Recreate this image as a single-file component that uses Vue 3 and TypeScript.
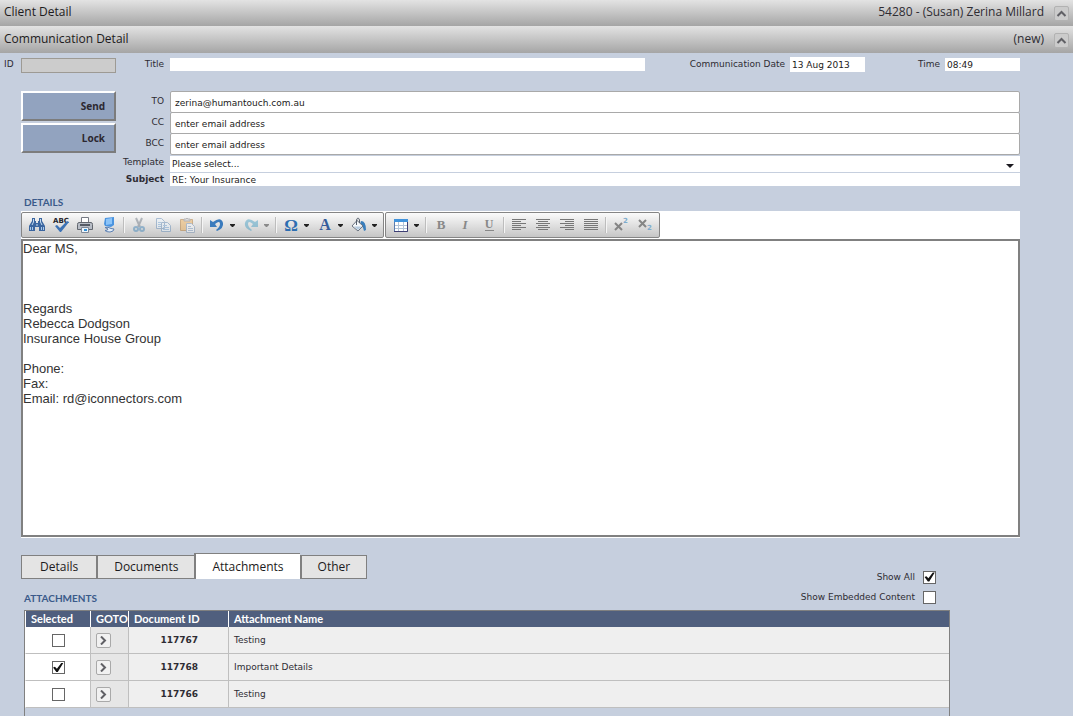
<script setup lang="ts">
import { ref } from 'vue'

interface Tool {
  icon: string
  label: string
  menu?: boolean
  disabled?: boolean
}

const title = ref('')
const recordId = ref('')
const date = ref('13 Aug 2013')
const time = ref('08:49')
const subject = ref('RE: Your Insurance')
const template = ref('')
const recipients = ref([
  { id: 'to', label: 'TO', value: 'zerina@humantouch.com.au' },
  { id: 'cc', label: 'CC', value: 'enter email address' },
  { id: 'bcc', label: 'BCC', value: 'enter email address' },
])
const body = ref(
  'Dear MS,\n\n\n\nRegards\nRebecca Dodgson\nInsurance House Group\n\nPhone:\nFax:\nEmail: rd@iconnectors.com',
)

const toolGroups: Tool[][][] = [
  [
    [
      { icon: 'find', label: 'Find' },
      { icon: 'spell', label: 'Check spelling' },
      { icon: 'print', label: 'Print' },
      { icon: 'preview', label: 'Select all' },
    ],
    [
      { icon: 'cut', label: 'Cut', disabled: true },
      { icon: 'copy', label: 'Copy', disabled: true },
      { icon: 'paste', label: 'Paste', disabled: true },
    ],
    [
      { icon: 'undo', label: 'Undo', menu: true },
      { icon: 'redo', label: 'Redo', menu: true, disabled: true },
    ],
    [
      { icon: 'omega', label: 'Insert symbol', menu: true },
      { icon: 'color', label: 'Text colour', menu: true },
      { icon: 'fill', label: 'Background colour', menu: true },
    ],
  ],
  [
    [{ icon: 'table', label: 'Insert table', menu: true }],
    [
      { icon: 'bold', label: 'Bold' },
      { icon: 'italic', label: 'Italic' },
      { icon: 'underline', label: 'Underline' },
    ],
    [
      { icon: 'left', label: 'Align left' },
      { icon: 'center', label: 'Align centre' },
      { icon: 'right', label: 'Align right' },
      { icon: 'justify', label: 'Justify' },
    ],
    [
      { icon: 'super', label: 'Superscript' },
      { icon: 'sub', label: 'Subscript' },
    ],
  ],
]

const alignPaths: Record<string, string> = {
  left: 'M1 2.5h14M1 4.5h9M1 6.5h14M1 8.5h9M1 10.5h14M1 12.5h9',
  center: 'M1 2.5h14M3 4.5h10M1 6.5h14M3 8.5h10M1 10.5h14M3 12.5h10',
  right: 'M1 2.5h14M6 4.5h9M1 6.5h14M6 8.5h9M1 10.5h14M6 12.5h9',
  justify: 'M1 2.5h14M1 4.5h14M1 6.5h14M1 8.5h14M1 10.5h14M1 12.5h14',
}

const tabs = ['Details', 'Documents', 'Attachments', 'Other']
const activeTab = ref('Attachments')
const showAll = ref(true)
const showEmbedded = ref(false)
const attachments = ref([
  { id: 117767, name: 'Testing', selected: false },
  { id: 117768, name: 'Important Details', selected: true },
  { id: 117766, name: 'Testing', selected: false },
])
</script>

<template>
  <main class="page">
    <header class="bar">
      <h1>Client Detail</h1>
      <span class="bar-info">54280 - (Susan) Zerina Millard</span>
      <button class="collapse" type="button" aria-label="Collapse client detail">
        <svg width="11" height="7" viewBox="0 0 11 7"><path d="M1.5 6 5.5 2l4 4" /></svg>
      </button>
    </header>
    <header class="bar second">
      <h1>Communication Detail</h1>
      <span class="bar-info">(new)</span>
      <button class="collapse" type="button" aria-label="Collapse communication detail">
        <svg width="11" height="7" viewBox="0 0 11 7"><path d="M1.5 6 5.5 2l4 4" /></svg>
      </button>
    </header>

    <section class="meta">
      <label class="id-label" for="rec-id">ID</label>
      <input id="rec-id" v-model="recordId" class="id-box" type="text" readonly />
      <label class="title-label" for="title">Title</label>
      <input id="title" v-model="title" class="plain title-box" type="text" />
      <label class="date-label" for="date">Communication Date</label>
      <input id="date" v-model="date" class="plain stamp date-box" type="text" />
      <label class="time-label" for="time">Time</label>
      <input id="time" v-model="time" class="plain stamp" type="text" />
    </section>

    <section class="compose">
      <div class="actions">
        <button type="button">Send</button>
        <button type="button">Lock</button>
      </div>
      <div class="fields">
        <div v-for="r in recipients" :key="r.id" class="recipient">
          <label :for="r.id">{{ r.label }}</label>
          <input :id="r.id" v-model="r.value" type="text" />
        </div>
        <div class="line template-line">
          <label for="template">Template</label>
          <div class="select-wrap">
            <select id="template" v-model="template">
              <option value="">Please select...</option>
            </select>
            <svg width="8" height="4" viewBox="0 0 8 4"><path d="M0 0h8L4 4z" /></svg>
          </div>
        </div>
        <div class="line">
          <label class="strong" for="subject">Subject</label>
          <input id="subject" v-model="subject" class="plain" type="text" />
        </div>
      </div>
    </section>

    <section class="editor">
      <h2><label for="body">DETAILS</label></h2>
      <div class="toolbars">
        <div v-for="(group, g) in toolGroups" :key="g" class="toolbar" role="toolbar">
          <div v-for="(set, s) in group" :key="s" class="set">
            <button
              v-for="tool in set"
              :key="tool.icon"
              type="button"
              class="tool"
              :class="{ menu: tool.menu, faded: tool.disabled }"
              :disabled="tool.disabled"
              :aria-label="tool.label"
            >
              <svg class="icon" width="16" height="16" viewBox="0 0 16 16">
                <g v-if="tool.icon === 'find'">
                  <path d="M3 1h3v3h1v2h2V4h1V1h3v3l3 5v5h-6v-4H6v4H0V9l3-5z" fill="#3b66a0" />
                  <path d="M4.500 2v3L3 8M11.500 2v3L13 8M7 8h2" stroke="#c5dcf2" fill="none" />
                  <path d="M1.500 10v3M3.500 10v3M12.500 10v3M14.500 10v3" stroke="#a9c8e8" fill="none" />
                </g>
                <g v-else-if="tool.icon === 'spell'">
                  <text x="0" y="6" font-size="7" font-weight="700" fill="#25252c">ABC</text>
                  <path d="m2 9 2-1 3 3 7-7 2 1-8 10H7z" fill="#3d73b5" />
                </g>
                <g v-else-if="tool.icon === 'print'">
                  <path d="M4.500 .5h7v6h-7z" fill="#fff" stroke="#767a84" />
                  <path d="M2 5.500h12q1.500 0 1.500 2v5H.5v-5q0-2 1.500-2z" fill="#b8bdc6" stroke="#62676f" />
                  <path d="M3 8h10" stroke="#555b66" stroke-width="2" />
                  <path d="M4.500 10.500h7v5h-7z" fill="#eef6fc" stroke="#7f8896" />
                  <path d="M7 13h3" stroke="#2f8fd8" stroke-width="2" />
                </g>
                <g v-else-if="tool.icon === 'preview'">
                  <path d="m4 1 9-1v8l-3 2-6-1-1-2z" fill="#4a94e0" />
                  <path d="m5 2 6-1v6l-6 1z" fill="#8cc4f8" />
                  <path d="M4 10.500q3-1 6 1l3 .5q0 2.500-4 3-4 0-5-1.500 3 0 3-1.500z" fill="#e3eefa" stroke="#5c7fb0" />
                </g>
                <g v-else-if="tool.icon === 'cut'">
                  <path d="m5 1 4 9M11 1 7 10" stroke="#66717e" stroke-width="2" fill="none" />
                  <circle cx="5" cy="12" r="2" fill="none" stroke="#367eb5" stroke-width="2" />
                  <circle cx="11" cy="12" r="2" fill="none" stroke="#367eb5" stroke-width="2" />
                </g>
                <g v-else-if="tool.icon === 'copy'">
                  <path d="M1.500 1.500h5l3 3v7h-8zM6.500 5.500h6l3 3v6h-9z" fill="#eaf4fd" stroke="#5884b3" />
                  <path d="M3 5.500h3M3 7.500h3M3 9.500h3M8 8.500h4M8 10.500h6M8 12.500h6" stroke="#6aa1d7" />
                </g>
                <g v-else-if="tool.icon === 'paste'">
                  <path d="M1.500 2.500h12v11h-12z" fill="#eda94b" stroke="#a9691a" />
                  <path d="M5 4V2h2q1-2 2 0h2v2z" fill="#c9c9cc" stroke="#74747a" />
                  <path d="M7.500 6.500h5l3 3v6h-8z" fill="#f5f8fc" stroke="#6e8bae" />
                  <path d="M9 9.500h3M9 11.500h5M9 13.500h5" stroke="#7698c1" />
                </g>
                <g v-else-if="tool.icon === 'undo' || tool.icon === 'redo'">
                  <path
                    :transform="tool.icon === 'redo' ? 'matrix(-1 0 0 1 16 0)' : undefined"
                    d="M1 3v7h7L6 7q5-4 5 0 0 3-4 6l1 1q7-3 6-8-2-7-10-1z"
                    :fill="tool.icon === 'redo' ? '#3c9ac1' : '#3a7bbd'"
                  />
                </g>
                <text v-else-if="tool.icon === 'omega'" class="glyph" x="8" y="14" font-size="17" fill="#2d6eb1">Ω</text>
                <text v-else-if="tool.icon === 'color'" class="glyph" x="8" y="13" font-size="16" fill="#355c9b">A</text>
                <g v-else-if="tool.icon === 'fill'">
                  <path d="M10 4q5 0 5 9l-2 1q-1-5-4-7z" fill="#397ebc" />
                  <path d="m6 3.500 6 5.500-5 5-6-5z" fill="#f4f7fa" stroke="#6c7480" />
                  <path d="M3 9.500h8L7 13z" fill="#b5cbe0" />
                  <path d="M5.500 8V3q1.500-4 3 0v3" fill="none" stroke="#58616e" />
                </g>
                <g v-else-if="tool.icon === 'table'">
                  <path d="M1.500 2.500h13v12h-13z" fill="#fff" stroke="#5a7cae" />
                  <path d="M1 2h14v3H1z" fill="#4193dc" />
                  <path d="M2 8.500h12M2 11.500h12M5.500 5v9M10.500 5v9" stroke="#b3c4d8" />
                  <path d="M14.500 5v9.500H1" fill="none" stroke="#3e3e73" />
                </g>
                <text v-else-if="tool.icon === 'bold'" class="glyph" x="8" y="12" font-size="13" fill="#888">B</text>
                <text v-else-if="tool.icon === 'italic'" class="glyph slant" x="8" y="12" font-size="13" fill="#888">I</text>
                <g v-else-if="tool.icon === 'underline'">
                  <text class="glyph" x="8" y="11" font-size="12" fill="#888">U</text>
                  <path d="M4 13.500h9" stroke="#888" />
                </g>
                <path v-else-if="alignPaths[tool.icon]" :d="alignPaths[tool.icon]" stroke="#777" />
                <g v-else-if="tool.icon === 'super'">
                  <path d="m2 6 7 7M9 6l-7 7" stroke="#858585" stroke-width="2" />
                  <text x="10" y="6" font-size="7" font-weight="700" fill="#7faccd">2</text>
                </g>
                <g v-else>
                  <path d="m2 3 7 7M9 3l-7 7" stroke="#858585" stroke-width="2" />
                  <text x="10" y="13" font-size="7" font-weight="700" fill="#7faccd">2</text>
                </g>
              </svg>
              <svg v-if="tool.menu" class="caret" width="5" height="3" viewBox="0 0 5 3">
                <path d="M0 0h5v1L3 3H2L0 1z" />
              </svg>
            </button>
          </div>
        </div>
      </div>
      <textarea id="body" v-model="body" spellcheck="false"></textarea>
    </section>

    <section class="lower">
      <div class="tabs" role="tablist">
        <button
          v-for="tab in tabs"
          :key="tab"
          type="button"
          role="tab"
          :aria-selected="activeTab === tab"
          :class="{ active: activeTab === tab }"
          @click="activeTab = tab"
        >
          {{ tab }}
        </button>
      </div>
      <div class="list-head">
        <h2>ATTACHMENTS</h2>
        <div class="options">
          <label>Show All<input v-model="showAll" type="checkbox" /></label>
          <label>Show Embedded Content<input v-model="showEmbedded" type="checkbox" /></label>
        </div>
      </div>
      <div class="grid-frame">
        <table>
          <colgroup>
            <col class="c-sel" />
            <col class="c-goto" />
            <col class="c-doc" />
            <col />
          </colgroup>
          <thead>
            <tr>
              <th>Selected</th>
              <th>GOTO</th>
              <th>Document ID</th>
              <th>Attachment Name</th>
            </tr>
          </thead>
          <tbody>
            <tr v-for="row in attachments" :key="row.id">
              <td class="sel">
                <input v-model="row.selected" type="checkbox" :aria-label="`Select ${row.id}`" />
              </td>
              <td class="goto">
                <button type="button" :aria-label="`Go to ${row.id}`">
                  <svg width="7" height="9" viewBox="0 0 7 9"><path d="m1 0.500 4 4-4 4" /></svg>
                </button>
              </td>
              <td class="doc">{{ row.id }}</td>
              <td>{{ row.name }}</td>
            </tr>
          </tbody>
        </table>
      </div>
    </section>
  </main>
</template>

<style>
html,
body {
  background: #c6cfde;
}
body {
  margin: 0;
  overflow: hidden;
}
</style>

<style scoped>
.page {
  min-height: 100vh;
  font: 9px/14px 'DejaVu Sans', Verdana, sans-serif;
  color: #2e2c33;
}
.page *,
.page *::before {
  box-sizing: border-box;
}
button,
input,
select,
textarea {
  margin: 0;
  padding: 0;
  border: 0;
  border-radius: 0;
  font: inherit;
  color: #1c1a20;
  outline: none;
}
h1,
h2 {
  margin: 0;
}
.bar {
  display: flex;
  align-items: flex-start;
  height: 26px;
  padding: 0 4px;
  background: linear-gradient(#e3e3e3, #a5a5a5);
  font: 12px/24px 'Open Sans', 'Noto Sans', sans-serif;
}
.bar.second {
  height: 27px;
  padding-top: 1px;
}
.bar h1 {
  flex: 1;
  font: inherit;
  color: #1d1b20;
}
.bar-info {
  margin-right: 10px;
}
.collapse {
  display: grid;
  place-items: center;
  width: 15px;
  height: 15px;
  margin-top: 6px;
  border: 1px solid #b2b2b2;
  border-radius: 2px;
  background: #cbcbcb;
}
.collapse path,
.goto path {
  fill: none;
  stroke: #606065;
  stroke-width: 2;
}

.meta {
  display: flex;
  align-items: flex-start;
  padding: 4px 53px 0 4px;
  height: 38px;
}
.meta label {
  flex: none;
  line-height: 14px;
}
.meta input {
  height: 13px;
  margin-top: 1px;
}
.plain {
  padding: 0 2px;
  background: #fff;
}
.meta .id-label {
  width: 17px;
}
.meta .id-box {
  width: 95px;
  height: 15px;
  border: 1px solid #9d9a94;
  background: #ccc;
}
.meta .title-label {
  width: 54px;
  padding-right: 6px;
  text-align: right;
}
.meta .title-box {
  flex: 1;
  min-width: 0;
}
.meta .date-label {
  width: 145px;
  padding-right: 5px;
  text-align: right;
}
.meta .time-label {
  width: 80px;
  padding-right: 5px;
  text-align: right;
}
.meta .stamp {
  width: 75px;
}
.meta .date-box {
  height: 15px;
  margin-top: 0;
}

.compose {
  display: flex;
  padding: 0 53px 0 21px;
}
.actions {
  display: flex;
  flex-direction: column;
  gap: 2px;
  width: 95px;
}
.actions button {
  height: 30px;
  padding-right: 9px;
  border: 2px solid;
  border-color: #fff #7c7c7c #7c7c7c #fff;
  background: #92a3bf;
  text-align: right;
  font-weight: 700;
  font-size: 10px;
  font-family: 'Noto Sans', sans-serif;
  color: #2c2830;
}
.fields {
  flex: 1;
  min-width: 0;
}
.recipient,
.line {
  display: flex;
}
.recipient {
  height: 21px;
}
.fields label {
  flex: none;
  width: 54px;
  padding-right: 6px;
  display: flex;
  justify-content: flex-end;
  line-height: 14px;
}
.recipient label {
  padding-top: 3px;
}
.recipient input {
  flex: 1;
  height: 22px;
  padding: 1px 4px 0;
  border: 1px solid #a9a9a9;
  border-radius: 2px;
  background: #fff;
}
.template-line {
  padding-top: 2px;
  margin-bottom: 1px;
}
.template-line label {
  line-height: 12px;
}
.select-wrap {
  flex: 1;
  position: relative;
  height: 16px;
}
select {
  display: block;
  appearance: none;
  width: 100%;
  height: 16px;
  padding: 0 2px;
  background: #fff;
}
.select-wrap svg {
  position: absolute;
  right: 6px;
  top: 8px;
  fill: #1c1a20;
  pointer-events: none;
}
.line .plain {
  flex: 1;
  height: 13px;
}
.line .strong {
  font-weight: 700;
  line-height: 12px;
}
.line:last-child {
  height: 13px;
}

h2 {
  font: 700 10px/12px Lato, 'Open Sans', sans-serif;
  color: #3a5a8a;
}
.editor {
  padding: 10px 53px 0 21px;
}
.editor h2 {
  padding-left: 3px;
  height: 15px;
}
.toolbars {
  display: flex;
  gap: 1px;
  height: 28px;
  padding: 1px 0;
  background: #fff;
}
.toolbar {
  display: flex;
  padding: 0 2px 0 3px;
  border: 1px solid #858585;
  border-radius: 2px;
  background: linear-gradient(#fbfbfb, #c6c6c6);
}
.set {
  display: flex;
}
.set + .set::before {
  content: '';
  width: 6px;
  height: 16px;
  margin-top: 4px;
  background: linear-gradient(90deg, transparent 2px, #bdbdbd 2px 3px, #f5f5f5 3px 4px, transparent 4px);
}
.tool {
  display: flex;
  align-items: center;
  width: 24px;
  padding: 0 4px;
  background: none;
}
.tool.menu {
  width: 34px;
}
.icon {
  flex: none;
  overflow: visible;
}
.faded .icon,
.faded .caret {
  opacity: 0.45;
}
.caret {
  flex: none;
  margin-left: 5px;
  fill: #222;
}
.glyph {
  font-family: 'Liberation Serif', serif;
  font-weight: 700;
  text-anchor: middle;
}
.slant {
  font-style: italic;
}
textarea {
  display: block;
  width: 100%;
  height: 298px;
  padding: 0;
  border: 2px solid #808080;
  background: #fff;
  box-shadow: 0 1px #fff;
  resize: none;
  font: 13px/15px 'Liberation Sans', Arial, sans-serif;
  color: #333;
}

.lower {
  padding: 16px 123px 0 21px;
}
.tabs {
  display: flex;
  align-items: flex-end;
  height: 26px;
}
.tabs button {
  height: 24px;
  padding: 0 16px;
  border: 1px solid #808080;
  border-left-width: 2px;
  border-right-width: 0;
  background: #e4e4e4;
  font: 12px/22px 'Open Sans', 'Noto Sans', sans-serif;
}
.tabs button:first-child {
  padding: 0 18px;
  border-left-width: 1px;
}
.tabs button:last-child {
  border-right-width: 1px;
}
.tabs .active {
  height: 26px;
  border-bottom: 0;
  background: #fff;
}
.list-head {
  display: flex;
  justify-content: space-between;
  align-items: flex-end;
  height: 31px;
  padding: 0 14px 3px 3px;
}
.list-head h2 {
  padding-bottom: 3px;
}
.options label {
  display: flex;
  justify-content: flex-end;
  align-items: center;
  gap: 8px;
  height: 20px;
  line-height: 16px;
}
input[type='checkbox'] {
  appearance: none;
  display: inline-grid;
  place-items: center;
  width: 13px;
  height: 13px;
  border: 1px solid #666;
  background: #fff;
}
input[type='checkbox']:checked::before {
  content: '';
  width: 11px;
  height: 11px;
  background: #111;
  clip-path: polygon(5% 50%, 22% 44%, 40% 62%, 80% 8%, 98% 10%, 48% 92%, 35% 92%);
}
.grid-frame {
  margin-left: 3px;
  min-height: 110px;
  border: 1px solid #808080;
  border-bottom: 0;
}
table {
  width: 100%;
  table-layout: fixed;
  border-collapse: separate;
  border-spacing: 0;
}
.c-sel {
  width: 66px;
}
.c-goto {
  width: 38px;
}
.c-doc {
  width: 100px;
}
th {
  height: 16px;
  padding: 0 0 0 5px;
  border-right: 1px solid #fff;
  background: #505f7e;
  color: #fff;
  text-align: left;
  white-space: nowrap;
  font: 700 11px/16px Lato, 'Open Sans', sans-serif;
}
th:first-child,
td:first-child {
  border-left: 1px solid #fff;
}
td {
  height: 27px;
  padding: 0 5px;
  border-right: 1px solid #bfbfbf;
  border-bottom: 1px solid #bfbfbf;
  background: #efefef;
}
th:last-child,
td:last-child {
  border-right: 0;
}
.sel {
  text-align: center;
  background: #fff;
}
.sel input {
  vertical-align: middle;
}
.goto {
  background: #e6e6e6;
}
.goto button {
  display: grid;
  place-items: center;
  width: 15px;
  height: 15px;
  border: 1px solid #a9a9a9;
  border-radius: 2px;
  background: #f1f1f1;
}
.doc {
  padding-right: 30px;
  text-align: right;
  font-weight: 700;
}
</style>
